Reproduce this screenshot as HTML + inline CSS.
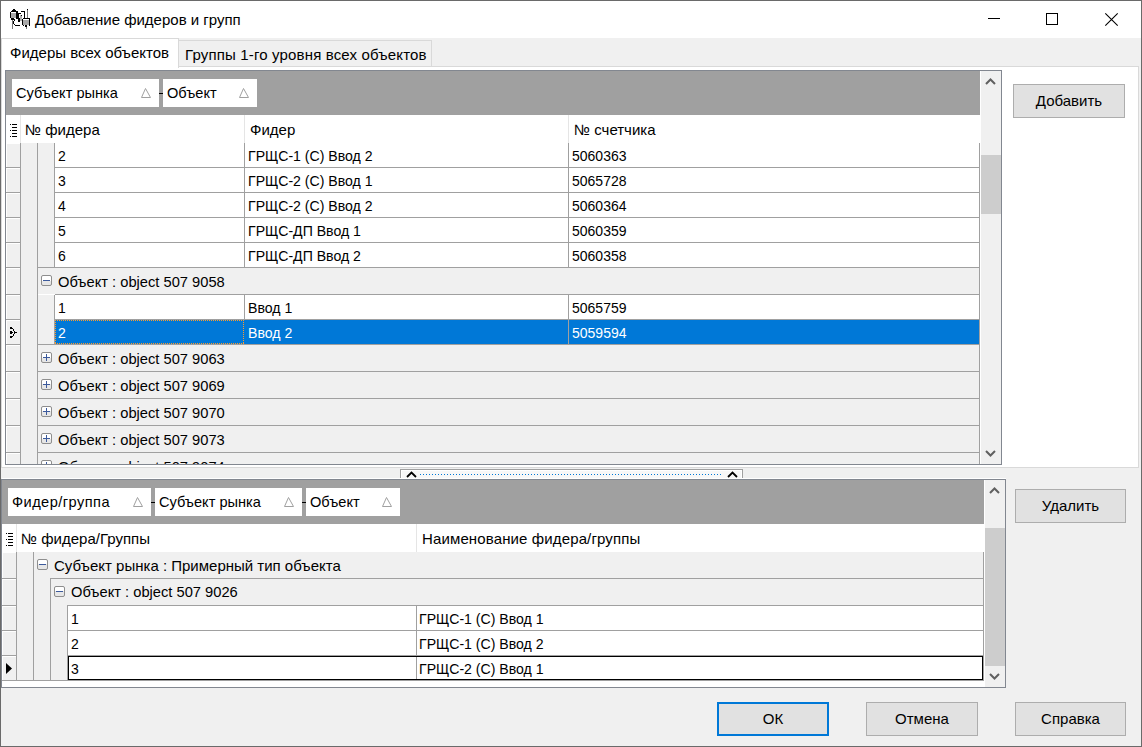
<!DOCTYPE html>
<html><head><meta charset="utf-8"><style>
html,body{margin:0;padding:0;width:1142px;height:747px;overflow:hidden;background:#f0f0f0}
div,span,svg{position:absolute}
span{font-family:"Liberation Sans", sans-serif;white-space:nowrap}
</style></head><body>
<div style="left:0px;top:0px;width:1142px;height:747px;background:#f0f0f0"></div>
<div style="left:1px;top:1px;width:1140px;height:37px;background:#fff"></div>
<div style="left:0px;top:0px;width:1142px;height:1px;background:#6a6a6a"></div>
<div style="left:0px;top:746px;width:1142px;height:1px;background:#6a6a6a"></div>
<div style="left:0px;top:0px;width:1px;height:747px;background:#6a6a6a"></div>
<div style="left:1141px;top:0px;width:1px;height:747px;background:#6a6a6a"></div>
<svg style="position:absolute;left:0px;top:0px" width="34" height="32" viewBox="0 0 34 32" shape-rendering="crispEdges"><rect x="13" y="9" width="2" height="1" fill="#000"/><rect x="12" y="10" width="4" height="1" fill="#000"/><rect x="11" y="11" width="6" height="1" fill="#000"/><rect x="10" y="12" width="1" height="6" fill="#000"/><rect x="11" y="12" width="5" height="1" fill="#fff"/><rect x="11" y="13" width="5" height="5" fill="#a8a8a8"/><rect x="16" y="11" width="2" height="8" fill="#000"/><rect x="11" y="18" width="3" height="2" fill="#000"/><rect x="12" y="20" width="1" height="9" fill="#777"/><rect x="14" y="19" width="1" height="2" fill="#000"/><rect x="13" y="21" width="1" height="3" fill="#000"/><rect x="14" y="24" width="1" height="1" fill="#000"/><rect x="15" y="25" width="5" height="1" fill="#000"/><rect x="18" y="13" width="1" height="9" fill="#000"/><rect x="19" y="18" width="1" height="4" fill="#000"/><rect x="20" y="15" width="2" height="6" fill="#b0b0b0"/><rect x="19" y="13" width="2" height="1" fill="#000"/><rect x="21" y="15" width="1" height="1" fill="#000"/><rect x="21" y="11" width="4" height="1" fill="#000"/><rect x="24" y="12" width="1" height="6" fill="#000"/><rect x="27" y="9" width="1" height="9" fill="#777"/><rect x="27" y="9" width="1" height="1" fill="#000"/><rect x="23" y="18" width="7" height="1" fill="#000"/><rect x="22" y="19" width="1" height="6" fill="#000"/><rect x="29" y="19" width="1" height="6" fill="#000"/><rect x="23" y="19" width="6" height="1" fill="#fff"/><rect x="23" y="20" width="6" height="5" fill="#a8a8a8"/><rect x="23" y="25" width="1" height="1" fill="#000"/><rect x="25" y="25" width="2" height="1" fill="#000"/><rect x="29" y="25" width="1" height="1" fill="#000"/><rect x="25" y="26" width="2" height="1" fill="#000"/><rect x="26" y="27" width="1" height="2" fill="#777"/></svg>
<span style="left:35px;top:11.42px;font-size:15px;line-height:normal;color:#000;">Добавление фидеров и групп</span>
<div style="left:988px;top:18px;width:12px;height:1px;background:#000"></div>
<div style="left:1046px;top:13px;width:12px;height:12px;border:1px solid #000;box-sizing:border-box;"></div>
<svg style="position:absolute;left:1104px;top:12px" width="15" height="15" viewBox="0 0 15 15" shape-rendering="crispEdges"><path d="M1.3 1.3 L13.7 13.7 M13.7 1.3 L1.3 13.7" stroke="#000" stroke-width="1.1" fill="none" shape-rendering="geometricPrecision"/></svg>
<div style="left:1px;top:66px;width:1138px;height:402px;border:1px solid #d9d9d9;box-sizing:border-box;background:#fff;"></div>
<div style="left:178px;top:40px;width:254px;height:27px;border:1px solid #d9d9d9;box-sizing:border-box;background:#f0f0f0;"></div>
<div style="left:1px;top:38px;width:178px;height:30px;border:1px solid #d9d9d9;box-sizing:border-box;background:#fff;"></div>
<div style="left:2px;top:66px;width:176px;height:2px;background:#fff"></div>
<span style="left:10px;top:44.42px;font-size:15px;line-height:normal;color:#000;">Фидеры всех объектов</span>
<span style="left:185px;top:46.42px;font-size:15px;line-height:normal;color:#000;letter-spacing:0.16px">Группы 1-го уровня всех объектов</span>
<div style="left:5px;top:70px;width:997px;height:395px;border:1px solid #828790;box-sizing:border-box;background:#fff;"></div>
<div style="left:6px;top:71px;width:974px;height:44px;background:#a0a0a0"></div>
<div style="left:12px;top:79px;width:147px;height:28px;background:#fff"></div>
<span style="left:16px;top:85.29px;font-size:14.6px;line-height:normal;color:#000;letter-spacing:0px">Субъект рынка</span>
<svg style="position:absolute;left:141px;top:88px" width="10" height="10" viewBox="0 0 10 10" shape-rendering="crispEdges"><path d="M4.5 0.5 L0.5 9.5 L9.5 9.5 Z" fill="none" stroke="#a0a0a0" stroke-width="1" shape-rendering="geometricPrecision"/></svg>
<div style="left:159px;top:93px;width:4px;height:1px;background:#000"></div>
<div style="left:163px;top:79px;width:94px;height:28px;background:#fff"></div>
<span style="left:167px;top:85.29px;font-size:14.6px;line-height:normal;color:#000;letter-spacing:0px">Объект</span>
<svg style="position:absolute;left:239px;top:88px" width="10" height="10" viewBox="0 0 10 10" shape-rendering="crispEdges"><path d="M4.5 0.5 L0.5 9.5 L9.5 9.5 Z" fill="none" stroke="#a0a0a0" stroke-width="1" shape-rendering="geometricPrecision"/></svg>
<div style="left:6px;top:115px;width:974px;height:28px;background:#fff"></div>
<div style="left:20px;top:115px;width:1px;height:28px;background:#e5e5e5"></div>
<div style="left:244px;top:115px;width:1px;height:28px;background:#e5e5e5"></div>
<div style="left:568px;top:115px;width:1px;height:28px;background:#e5e5e5"></div>
<svg style="position:absolute;left:10px;top:124px" width="8" height="14" viewBox="0 0 8 14" shape-rendering="crispEdges"><rect x="2" y="0" width="5" height="1" fill="#000"/><rect x="2" y="3" width="5" height="1" fill="#000"/><rect x="2" y="6" width="5" height="1" fill="#000"/><rect x="2" y="9" width="5" height="1" fill="#000"/><rect x="2" y="12" width="5" height="1" fill="#000"/><rect x="0" y="0" width="1" height="1" fill="#000"/><rect x="0" y="6" width="1" height="1" fill="#000"/><rect x="0" y="12" width="1" height="1" fill="#000"/></svg>
<span style="left:25px;top:121.42px;font-size:15px;line-height:normal;color:#000;">№ фидера</span>
<span style="left:250px;top:121.42px;font-size:15px;line-height:normal;color:#000;">Фидер</span>
<span style="left:574px;top:121.42px;font-size:15px;line-height:normal;color:#000;">№ счетчика</span>
<div style="left:980px;top:71px;width:1px;height:393px;background:#fff"></div>
<div style="left:981px;top:71px;width:20px;height:393px;background:#f0f0f0"></div>
<div style="left:981px;top:155px;width:20px;height:59px;background:#cdcdcd"></div>
<svg style="position:absolute;left:985px;top:78px" width="11" height="7" viewBox="0 0 11 7" shape-rendering="crispEdges"><path d="M1 6 L5.5 1.5 L10 6" fill="none" stroke="#606060" stroke-width="2" shape-rendering="geometricPrecision"/></svg>
<svg style="position:absolute;left:985px;top:450px" width="11" height="7" viewBox="0 0 11 7" shape-rendering="crispEdges"><path d="M1 1 L5.5 5.5 L10 1" fill="none" stroke="#606060" stroke-width="2" shape-rendering="geometricPrecision"/></svg>
<div style="left:20px;top:143px;width:1px;height:321px;background:#a0a0a0"></div>
<div style="left:37px;top:143px;width:1px;height:321px;background:#a0a0a0"></div>
<div style="left:21px;top:143px;width:16px;height:321px;background:#f0f0f0"></div>
<div style="left:6px;top:143px;width:14px;height:25px;background:#f0f0f0"></div>
<div style="left:6px;top:143px;width:14px;height:1px;background:#fff"></div>
<div style="left:6px;top:143px;width:1px;height:25px;background:#fff"></div>
<div style="left:6px;top:167px;width:14px;height:1px;background:#a0a0a0"></div>
<div style="left:38px;top:143px;width:16px;height:25px;background:#f0f0f0"></div>
<div style="left:54px;top:143px;width:1px;height:25px;background:#a0a0a0"></div>
<div style="left:244px;top:143px;width:1px;height:25px;background:#a0a0a0"></div>
<div style="left:568px;top:143px;width:1px;height:25px;background:#a0a0a0"></div>
<div style="left:979px;top:143px;width:1px;height:25px;background:#a0a0a0"></div>
<div style="left:55px;top:167px;width:925px;height:1px;background:#a0a0a0"></div>
<span style="left:58px;top:148.33px;font-size:14px;line-height:normal;color:#000;">2</span>
<span style="left:248px;top:148.24px;font-size:14.1px;line-height:normal;color:#000;">ГРЩС-1 (С) Ввод 2</span>
<span style="left:572px;top:148.33px;font-size:14px;line-height:normal;color:#000;">5060363</span>
<div style="left:6px;top:168px;width:14px;height:25px;background:#f0f0f0"></div>
<div style="left:6px;top:168px;width:14px;height:1px;background:#fff"></div>
<div style="left:6px;top:168px;width:1px;height:25px;background:#fff"></div>
<div style="left:6px;top:192px;width:14px;height:1px;background:#a0a0a0"></div>
<div style="left:38px;top:168px;width:16px;height:25px;background:#f0f0f0"></div>
<div style="left:54px;top:168px;width:1px;height:25px;background:#a0a0a0"></div>
<div style="left:244px;top:168px;width:1px;height:25px;background:#a0a0a0"></div>
<div style="left:568px;top:168px;width:1px;height:25px;background:#a0a0a0"></div>
<div style="left:979px;top:168px;width:1px;height:25px;background:#a0a0a0"></div>
<div style="left:55px;top:192px;width:925px;height:1px;background:#a0a0a0"></div>
<span style="left:58px;top:173.33px;font-size:14px;line-height:normal;color:#000;">3</span>
<span style="left:248px;top:173.24px;font-size:14.1px;line-height:normal;color:#000;">ГРЩС-2 (С) Ввод 1</span>
<span style="left:572px;top:173.33px;font-size:14px;line-height:normal;color:#000;">5065728</span>
<div style="left:6px;top:193px;width:14px;height:25px;background:#f0f0f0"></div>
<div style="left:6px;top:193px;width:14px;height:1px;background:#fff"></div>
<div style="left:6px;top:193px;width:1px;height:25px;background:#fff"></div>
<div style="left:6px;top:217px;width:14px;height:1px;background:#a0a0a0"></div>
<div style="left:38px;top:193px;width:16px;height:25px;background:#f0f0f0"></div>
<div style="left:54px;top:193px;width:1px;height:25px;background:#a0a0a0"></div>
<div style="left:244px;top:193px;width:1px;height:25px;background:#a0a0a0"></div>
<div style="left:568px;top:193px;width:1px;height:25px;background:#a0a0a0"></div>
<div style="left:979px;top:193px;width:1px;height:25px;background:#a0a0a0"></div>
<div style="left:55px;top:217px;width:925px;height:1px;background:#a0a0a0"></div>
<span style="left:58px;top:198.33px;font-size:14px;line-height:normal;color:#000;">4</span>
<span style="left:248px;top:198.24px;font-size:14.1px;line-height:normal;color:#000;">ГРЩС-2 (С) Ввод 2</span>
<span style="left:572px;top:198.33px;font-size:14px;line-height:normal;color:#000;">5060364</span>
<div style="left:6px;top:218px;width:14px;height:25px;background:#f0f0f0"></div>
<div style="left:6px;top:218px;width:14px;height:1px;background:#fff"></div>
<div style="left:6px;top:218px;width:1px;height:25px;background:#fff"></div>
<div style="left:6px;top:242px;width:14px;height:1px;background:#a0a0a0"></div>
<div style="left:38px;top:218px;width:16px;height:25px;background:#f0f0f0"></div>
<div style="left:54px;top:218px;width:1px;height:25px;background:#a0a0a0"></div>
<div style="left:244px;top:218px;width:1px;height:25px;background:#a0a0a0"></div>
<div style="left:568px;top:218px;width:1px;height:25px;background:#a0a0a0"></div>
<div style="left:979px;top:218px;width:1px;height:25px;background:#a0a0a0"></div>
<div style="left:55px;top:242px;width:925px;height:1px;background:#a0a0a0"></div>
<span style="left:58px;top:223.33px;font-size:14px;line-height:normal;color:#000;">5</span>
<span style="left:248px;top:223.24px;font-size:14.1px;line-height:normal;color:#000;">ГРЩС-ДП Ввод 1</span>
<span style="left:572px;top:223.33px;font-size:14px;line-height:normal;color:#000;">5060359</span>
<div style="left:6px;top:243px;width:14px;height:25px;background:#f0f0f0"></div>
<div style="left:6px;top:243px;width:14px;height:1px;background:#fff"></div>
<div style="left:6px;top:243px;width:1px;height:25px;background:#fff"></div>
<div style="left:6px;top:267px;width:14px;height:1px;background:#a0a0a0"></div>
<div style="left:38px;top:243px;width:16px;height:25px;background:#f0f0f0"></div>
<div style="left:54px;top:243px;width:1px;height:25px;background:#a0a0a0"></div>
<div style="left:244px;top:243px;width:1px;height:25px;background:#a0a0a0"></div>
<div style="left:568px;top:243px;width:1px;height:25px;background:#a0a0a0"></div>
<div style="left:979px;top:243px;width:1px;height:25px;background:#a0a0a0"></div>
<div style="left:55px;top:267px;width:925px;height:1px;background:#a0a0a0"></div>
<span style="left:58px;top:248.33px;font-size:14px;line-height:normal;color:#000;">6</span>
<span style="left:248px;top:248.24px;font-size:14.1px;line-height:normal;color:#000;">ГРЩС-ДП Ввод 2</span>
<span style="left:572px;top:248.33px;font-size:14px;line-height:normal;color:#000;">5060358</span>
<div style="left:6px;top:268px;width:14px;height:27px;background:#f0f0f0"></div>
<div style="left:6px;top:268px;width:14px;height:1px;background:#fff"></div>
<div style="left:6px;top:268px;width:1px;height:27px;background:#fff"></div>
<div style="left:6px;top:294px;width:14px;height:1px;background:#a0a0a0"></div>
<div style="left:38px;top:267px;width:942px;height:1px;background:#a0a0a0"></div>
<div style="left:38px;top:268px;width:941px;height:26px;background:#f0f0f0"></div>
<div style="left:979px;top:268px;width:1px;height:27px;background:#a0a0a0"></div>
<svg style="position:absolute;left:41px;top:275px" width="11" height="11" viewBox="0 0 11 11" shape-rendering="crispEdges"><defs><linearGradient id="g" x1="0" y1="0" x2="0" y2="1"><stop offset="0.5" stop-color="#fff"/><stop offset="0.5" stop-color="#e6e6e6"/></linearGradient></defs><rect x="0.5" y="0.5" width="10" height="10" rx="1.5" fill="url(#g)" stroke="#8e8e8e" stroke-width="1" shape-rendering="geometricPrecision"/><rect x="2" y="5" width="7" height="1" fill="#3c5a9c"/></svg>
<span style="left:58px;top:274.20px;font-size:14.7px;line-height:normal;color:#000;">Объект : object 507 9058</span>
<div style="left:55px;top:294px;width:925px;height:1px;background:#a0a0a0"></div>
<div style="left:6px;top:295px;width:14px;height:25px;background:#f0f0f0"></div>
<div style="left:6px;top:295px;width:14px;height:1px;background:#fff"></div>
<div style="left:6px;top:295px;width:1px;height:25px;background:#fff"></div>
<div style="left:6px;top:319px;width:14px;height:1px;background:#a0a0a0"></div>
<div style="left:38px;top:295px;width:16px;height:25px;background:#f0f0f0"></div>
<div style="left:54px;top:295px;width:1px;height:25px;background:#a0a0a0"></div>
<div style="left:244px;top:295px;width:1px;height:25px;background:#a0a0a0"></div>
<div style="left:568px;top:295px;width:1px;height:25px;background:#a0a0a0"></div>
<div style="left:979px;top:295px;width:1px;height:25px;background:#a0a0a0"></div>
<div style="left:55px;top:319px;width:925px;height:1px;background:#a0a0a0"></div>
<span style="left:58px;top:300.33px;font-size:14px;line-height:normal;color:#000;">1</span>
<span style="left:248px;top:300.24px;font-size:14.1px;line-height:normal;color:#000;">Ввод 1</span>
<span style="left:572px;top:300.33px;font-size:14px;line-height:normal;color:#000;">5065759</span>
<div style="left:6px;top:320px;width:14px;height:25px;background:#f0f0f0"></div>
<div style="left:6px;top:320px;width:14px;height:1px;background:#fff"></div>
<div style="left:6px;top:320px;width:1px;height:25px;background:#fff"></div>
<div style="left:6px;top:344px;width:14px;height:1px;background:#a0a0a0"></div>
<div style="left:38px;top:320px;width:16px;height:25px;background:#f0f0f0"></div>
<div style="left:54px;top:320px;width:1px;height:25px;background:#a0a0a0"></div>
<div style="left:55px;top:320px;width:924px;height:24px;background:#0078d7"></div>
<div style="left:568px;top:320px;width:1px;height:24px;background:#a0a0a0"></div>
<svg style="position:absolute;left:55px;top:320px" width="189" height="24" viewBox="0 0 189 24" shape-rendering="crispEdges"><rect x="0" y="0" width="1" height="1" fill="#ff9c2a"/><rect x="0" y="23" width="1" height="1" fill="#ff9c2a"/><rect x="2" y="0" width="1" height="1" fill="#ff9c2a"/><rect x="2" y="23" width="1" height="1" fill="#ff9c2a"/><rect x="4" y="0" width="1" height="1" fill="#ff9c2a"/><rect x="4" y="23" width="1" height="1" fill="#ff9c2a"/><rect x="6" y="0" width="1" height="1" fill="#ff9c2a"/><rect x="6" y="23" width="1" height="1" fill="#ff9c2a"/><rect x="8" y="0" width="1" height="1" fill="#ff9c2a"/><rect x="8" y="23" width="1" height="1" fill="#ff9c2a"/><rect x="10" y="0" width="1" height="1" fill="#ff9c2a"/><rect x="10" y="23" width="1" height="1" fill="#ff9c2a"/><rect x="12" y="0" width="1" height="1" fill="#ff9c2a"/><rect x="12" y="23" width="1" height="1" fill="#ff9c2a"/><rect x="14" y="0" width="1" height="1" fill="#ff9c2a"/><rect x="14" y="23" width="1" height="1" fill="#ff9c2a"/><rect x="16" y="0" width="1" height="1" fill="#ff9c2a"/><rect x="16" y="23" width="1" height="1" fill="#ff9c2a"/><rect x="18" y="0" width="1" height="1" fill="#ff9c2a"/><rect x="18" y="23" width="1" height="1" fill="#ff9c2a"/><rect x="20" y="0" width="1" height="1" fill="#ff9c2a"/><rect x="20" y="23" width="1" height="1" fill="#ff9c2a"/><rect x="22" y="0" width="1" height="1" fill="#ff9c2a"/><rect x="22" y="23" width="1" height="1" fill="#ff9c2a"/><rect x="24" y="0" width="1" height="1" fill="#ff9c2a"/><rect x="24" y="23" width="1" height="1" fill="#ff9c2a"/><rect x="26" y="0" width="1" height="1" fill="#ff9c2a"/><rect x="26" y="23" width="1" height="1" fill="#ff9c2a"/><rect x="28" y="0" width="1" height="1" fill="#ff9c2a"/><rect x="28" y="23" width="1" height="1" fill="#ff9c2a"/><rect x="30" y="0" width="1" height="1" fill="#ff9c2a"/><rect x="30" y="23" width="1" height="1" fill="#ff9c2a"/><rect x="32" y="0" width="1" height="1" fill="#ff9c2a"/><rect x="32" y="23" width="1" height="1" fill="#ff9c2a"/><rect x="34" y="0" width="1" height="1" fill="#ff9c2a"/><rect x="34" y="23" width="1" height="1" fill="#ff9c2a"/><rect x="36" y="0" width="1" height="1" fill="#ff9c2a"/><rect x="36" y="23" width="1" height="1" fill="#ff9c2a"/><rect x="38" y="0" width="1" height="1" fill="#ff9c2a"/><rect x="38" y="23" width="1" height="1" fill="#ff9c2a"/><rect x="40" y="0" width="1" height="1" fill="#ff9c2a"/><rect x="40" y="23" width="1" height="1" fill="#ff9c2a"/><rect x="42" y="0" width="1" height="1" fill="#ff9c2a"/><rect x="42" y="23" width="1" height="1" fill="#ff9c2a"/><rect x="44" y="0" width="1" height="1" fill="#ff9c2a"/><rect x="44" y="23" width="1" height="1" fill="#ff9c2a"/><rect x="46" y="0" width="1" height="1" fill="#ff9c2a"/><rect x="46" y="23" width="1" height="1" fill="#ff9c2a"/><rect x="48" y="0" width="1" height="1" fill="#ff9c2a"/><rect x="48" y="23" width="1" height="1" fill="#ff9c2a"/><rect x="50" y="0" width="1" height="1" fill="#ff9c2a"/><rect x="50" y="23" width="1" height="1" fill="#ff9c2a"/><rect x="52" y="0" width="1" height="1" fill="#ff9c2a"/><rect x="52" y="23" width="1" height="1" fill="#ff9c2a"/><rect x="54" y="0" width="1" height="1" fill="#ff9c2a"/><rect x="54" y="23" width="1" height="1" fill="#ff9c2a"/><rect x="56" y="0" width="1" height="1" fill="#ff9c2a"/><rect x="56" y="23" width="1" height="1" fill="#ff9c2a"/><rect x="58" y="0" width="1" height="1" fill="#ff9c2a"/><rect x="58" y="23" width="1" height="1" fill="#ff9c2a"/><rect x="60" y="0" width="1" height="1" fill="#ff9c2a"/><rect x="60" y="23" width="1" height="1" fill="#ff9c2a"/><rect x="62" y="0" width="1" height="1" fill="#ff9c2a"/><rect x="62" y="23" width="1" height="1" fill="#ff9c2a"/><rect x="64" y="0" width="1" height="1" fill="#ff9c2a"/><rect x="64" y="23" width="1" height="1" fill="#ff9c2a"/><rect x="66" y="0" width="1" height="1" fill="#ff9c2a"/><rect x="66" y="23" width="1" height="1" fill="#ff9c2a"/><rect x="68" y="0" width="1" height="1" fill="#ff9c2a"/><rect x="68" y="23" width="1" height="1" fill="#ff9c2a"/><rect x="70" y="0" width="1" height="1" fill="#ff9c2a"/><rect x="70" y="23" width="1" height="1" fill="#ff9c2a"/><rect x="72" y="0" width="1" height="1" fill="#ff9c2a"/><rect x="72" y="23" width="1" height="1" fill="#ff9c2a"/><rect x="74" y="0" width="1" height="1" fill="#ff9c2a"/><rect x="74" y="23" width="1" height="1" fill="#ff9c2a"/><rect x="76" y="0" width="1" height="1" fill="#ff9c2a"/><rect x="76" y="23" width="1" height="1" fill="#ff9c2a"/><rect x="78" y="0" width="1" height="1" fill="#ff9c2a"/><rect x="78" y="23" width="1" height="1" fill="#ff9c2a"/><rect x="80" y="0" width="1" height="1" fill="#ff9c2a"/><rect x="80" y="23" width="1" height="1" fill="#ff9c2a"/><rect x="82" y="0" width="1" height="1" fill="#ff9c2a"/><rect x="82" y="23" width="1" height="1" fill="#ff9c2a"/><rect x="84" y="0" width="1" height="1" fill="#ff9c2a"/><rect x="84" y="23" width="1" height="1" fill="#ff9c2a"/><rect x="86" y="0" width="1" height="1" fill="#ff9c2a"/><rect x="86" y="23" width="1" height="1" fill="#ff9c2a"/><rect x="88" y="0" width="1" height="1" fill="#ff9c2a"/><rect x="88" y="23" width="1" height="1" fill="#ff9c2a"/><rect x="90" y="0" width="1" height="1" fill="#ff9c2a"/><rect x="90" y="23" width="1" height="1" fill="#ff9c2a"/><rect x="92" y="0" width="1" height="1" fill="#ff9c2a"/><rect x="92" y="23" width="1" height="1" fill="#ff9c2a"/><rect x="94" y="0" width="1" height="1" fill="#ff9c2a"/><rect x="94" y="23" width="1" height="1" fill="#ff9c2a"/><rect x="96" y="0" width="1" height="1" fill="#ff9c2a"/><rect x="96" y="23" width="1" height="1" fill="#ff9c2a"/><rect x="98" y="0" width="1" height="1" fill="#ff9c2a"/><rect x="98" y="23" width="1" height="1" fill="#ff9c2a"/><rect x="100" y="0" width="1" height="1" fill="#ff9c2a"/><rect x="100" y="23" width="1" height="1" fill="#ff9c2a"/><rect x="102" y="0" width="1" height="1" fill="#ff9c2a"/><rect x="102" y="23" width="1" height="1" fill="#ff9c2a"/><rect x="104" y="0" width="1" height="1" fill="#ff9c2a"/><rect x="104" y="23" width="1" height="1" fill="#ff9c2a"/><rect x="106" y="0" width="1" height="1" fill="#ff9c2a"/><rect x="106" y="23" width="1" height="1" fill="#ff9c2a"/><rect x="108" y="0" width="1" height="1" fill="#ff9c2a"/><rect x="108" y="23" width="1" height="1" fill="#ff9c2a"/><rect x="110" y="0" width="1" height="1" fill="#ff9c2a"/><rect x="110" y="23" width="1" height="1" fill="#ff9c2a"/><rect x="112" y="0" width="1" height="1" fill="#ff9c2a"/><rect x="112" y="23" width="1" height="1" fill="#ff9c2a"/><rect x="114" y="0" width="1" height="1" fill="#ff9c2a"/><rect x="114" y="23" width="1" height="1" fill="#ff9c2a"/><rect x="116" y="0" width="1" height="1" fill="#ff9c2a"/><rect x="116" y="23" width="1" height="1" fill="#ff9c2a"/><rect x="118" y="0" width="1" height="1" fill="#ff9c2a"/><rect x="118" y="23" width="1" height="1" fill="#ff9c2a"/><rect x="120" y="0" width="1" height="1" fill="#ff9c2a"/><rect x="120" y="23" width="1" height="1" fill="#ff9c2a"/><rect x="122" y="0" width="1" height="1" fill="#ff9c2a"/><rect x="122" y="23" width="1" height="1" fill="#ff9c2a"/><rect x="124" y="0" width="1" height="1" fill="#ff9c2a"/><rect x="124" y="23" width="1" height="1" fill="#ff9c2a"/><rect x="126" y="0" width="1" height="1" fill="#ff9c2a"/><rect x="126" y="23" width="1" height="1" fill="#ff9c2a"/><rect x="128" y="0" width="1" height="1" fill="#ff9c2a"/><rect x="128" y="23" width="1" height="1" fill="#ff9c2a"/><rect x="130" y="0" width="1" height="1" fill="#ff9c2a"/><rect x="130" y="23" width="1" height="1" fill="#ff9c2a"/><rect x="132" y="0" width="1" height="1" fill="#ff9c2a"/><rect x="132" y="23" width="1" height="1" fill="#ff9c2a"/><rect x="134" y="0" width="1" height="1" fill="#ff9c2a"/><rect x="134" y="23" width="1" height="1" fill="#ff9c2a"/><rect x="136" y="0" width="1" height="1" fill="#ff9c2a"/><rect x="136" y="23" width="1" height="1" fill="#ff9c2a"/><rect x="138" y="0" width="1" height="1" fill="#ff9c2a"/><rect x="138" y="23" width="1" height="1" fill="#ff9c2a"/><rect x="140" y="0" width="1" height="1" fill="#ff9c2a"/><rect x="140" y="23" width="1" height="1" fill="#ff9c2a"/><rect x="142" y="0" width="1" height="1" fill="#ff9c2a"/><rect x="142" y="23" width="1" height="1" fill="#ff9c2a"/><rect x="144" y="0" width="1" height="1" fill="#ff9c2a"/><rect x="144" y="23" width="1" height="1" fill="#ff9c2a"/><rect x="146" y="0" width="1" height="1" fill="#ff9c2a"/><rect x="146" y="23" width="1" height="1" fill="#ff9c2a"/><rect x="148" y="0" width="1" height="1" fill="#ff9c2a"/><rect x="148" y="23" width="1" height="1" fill="#ff9c2a"/><rect x="150" y="0" width="1" height="1" fill="#ff9c2a"/><rect x="150" y="23" width="1" height="1" fill="#ff9c2a"/><rect x="152" y="0" width="1" height="1" fill="#ff9c2a"/><rect x="152" y="23" width="1" height="1" fill="#ff9c2a"/><rect x="154" y="0" width="1" height="1" fill="#ff9c2a"/><rect x="154" y="23" width="1" height="1" fill="#ff9c2a"/><rect x="156" y="0" width="1" height="1" fill="#ff9c2a"/><rect x="156" y="23" width="1" height="1" fill="#ff9c2a"/><rect x="158" y="0" width="1" height="1" fill="#ff9c2a"/><rect x="158" y="23" width="1" height="1" fill="#ff9c2a"/><rect x="160" y="0" width="1" height="1" fill="#ff9c2a"/><rect x="160" y="23" width="1" height="1" fill="#ff9c2a"/><rect x="162" y="0" width="1" height="1" fill="#ff9c2a"/><rect x="162" y="23" width="1" height="1" fill="#ff9c2a"/><rect x="164" y="0" width="1" height="1" fill="#ff9c2a"/><rect x="164" y="23" width="1" height="1" fill="#ff9c2a"/><rect x="166" y="0" width="1" height="1" fill="#ff9c2a"/><rect x="166" y="23" width="1" height="1" fill="#ff9c2a"/><rect x="168" y="0" width="1" height="1" fill="#ff9c2a"/><rect x="168" y="23" width="1" height="1" fill="#ff9c2a"/><rect x="170" y="0" width="1" height="1" fill="#ff9c2a"/><rect x="170" y="23" width="1" height="1" fill="#ff9c2a"/><rect x="172" y="0" width="1" height="1" fill="#ff9c2a"/><rect x="172" y="23" width="1" height="1" fill="#ff9c2a"/><rect x="174" y="0" width="1" height="1" fill="#ff9c2a"/><rect x="174" y="23" width="1" height="1" fill="#ff9c2a"/><rect x="176" y="0" width="1" height="1" fill="#ff9c2a"/><rect x="176" y="23" width="1" height="1" fill="#ff9c2a"/><rect x="178" y="0" width="1" height="1" fill="#ff9c2a"/><rect x="178" y="23" width="1" height="1" fill="#ff9c2a"/><rect x="180" y="0" width="1" height="1" fill="#ff9c2a"/><rect x="180" y="23" width="1" height="1" fill="#ff9c2a"/><rect x="182" y="0" width="1" height="1" fill="#ff9c2a"/><rect x="182" y="23" width="1" height="1" fill="#ff9c2a"/><rect x="184" y="0" width="1" height="1" fill="#ff9c2a"/><rect x="184" y="23" width="1" height="1" fill="#ff9c2a"/><rect x="186" y="0" width="1" height="1" fill="#ff9c2a"/><rect x="186" y="23" width="1" height="1" fill="#ff9c2a"/><rect x="188" y="0" width="1" height="1" fill="#ff9c2a"/><rect x="188" y="23" width="1" height="1" fill="#ff9c2a"/><rect x="0" y="2" width="1" height="1" fill="#ff9c2a"/><rect x="188" y="2" width="1" height="1" fill="#ff9c2a"/><rect x="0" y="4" width="1" height="1" fill="#ff9c2a"/><rect x="188" y="4" width="1" height="1" fill="#ff9c2a"/><rect x="0" y="6" width="1" height="1" fill="#ff9c2a"/><rect x="188" y="6" width="1" height="1" fill="#ff9c2a"/><rect x="0" y="8" width="1" height="1" fill="#ff9c2a"/><rect x="188" y="8" width="1" height="1" fill="#ff9c2a"/><rect x="0" y="10" width="1" height="1" fill="#ff9c2a"/><rect x="188" y="10" width="1" height="1" fill="#ff9c2a"/><rect x="0" y="12" width="1" height="1" fill="#ff9c2a"/><rect x="188" y="12" width="1" height="1" fill="#ff9c2a"/><rect x="0" y="14" width="1" height="1" fill="#ff9c2a"/><rect x="188" y="14" width="1" height="1" fill="#ff9c2a"/><rect x="0" y="16" width="1" height="1" fill="#ff9c2a"/><rect x="188" y="16" width="1" height="1" fill="#ff9c2a"/><rect x="0" y="18" width="1" height="1" fill="#ff9c2a"/><rect x="188" y="18" width="1" height="1" fill="#ff9c2a"/><rect x="0" y="20" width="1" height="1" fill="#ff9c2a"/><rect x="188" y="20" width="1" height="1" fill="#ff9c2a"/><rect x="0" y="22" width="1" height="1" fill="#ff9c2a"/><rect x="188" y="22" width="1" height="1" fill="#ff9c2a"/></svg>
<div style="left:979px;top:320px;width:1px;height:25px;background:#a0a0a0"></div>
<div style="left:55px;top:344px;width:925px;height:1px;background:#a0a0a0"></div>
<span style="left:58px;top:325.33px;font-size:14px;line-height:normal;color:#fff;">2</span>
<span style="left:248px;top:325.24px;font-size:14.1px;line-height:normal;color:#fff;">Ввод 2</span>
<span style="left:572px;top:325.33px;font-size:14px;line-height:normal;color:#fff;">5059594</span>
<svg style="position:absolute;left:10px;top:327px" width="8" height="12" viewBox="0 0 8 12" shape-rendering="crispEdges"><rect x="0" y="0" width="2" height="2" fill="#000"/><rect x="2" y="1" width="1" height="1" fill="#000"/><rect x="3" y="2" width="1" height="2" fill="#000"/><rect x="4" y="4" width="1" height="3" fill="#000"/><rect x="5" y="5" width="2" height="1" fill="#000"/><rect x="0" y="4" width="2" height="3" fill="#000"/><rect x="2" y="5" width="1" height="1" fill="#000"/><rect x="3" y="7" width="1" height="2" fill="#000"/><rect x="2" y="9" width="1" height="1" fill="#000"/><rect x="0" y="9" width="2" height="2" fill="#000"/></svg>
<div style="left:0;top:0;width:1142px;height:464px;overflow:hidden">
<div style="left:6px;top:345px;width:14px;height:27px;background:#f0f0f0"></div>
<div style="left:6px;top:345px;width:14px;height:1px;background:#fff"></div>
<div style="left:6px;top:345px;width:1px;height:27px;background:#fff"></div>
<div style="left:6px;top:371px;width:14px;height:1px;background:#a0a0a0"></div>
<div style="left:38px;top:344px;width:942px;height:1px;background:#a0a0a0"></div>
<div style="left:38px;top:345px;width:941px;height:26px;background:#f0f0f0"></div>
<div style="left:979px;top:345px;width:1px;height:27px;background:#a0a0a0"></div>
<svg style="position:absolute;left:41px;top:352px" width="11" height="11" viewBox="0 0 11 11" shape-rendering="crispEdges"><defs><linearGradient id="g" x1="0" y1="0" x2="0" y2="1"><stop offset="0.5" stop-color="#fff"/><stop offset="0.5" stop-color="#e6e6e6"/></linearGradient></defs><rect x="0.5" y="0.5" width="10" height="10" rx="1.5" fill="url(#g)" stroke="#8e8e8e" stroke-width="1" shape-rendering="geometricPrecision"/><rect x="2" y="5" width="7" height="1" fill="#3c5a9c"/><rect x="5" y="2" width="1" height="7" fill="#3c5a9c"/></svg>
<span style="left:58px;top:351.20px;font-size:14.7px;line-height:normal;color:#000;">Объект : object 507 9063</span>
<div style="left:6px;top:372px;width:14px;height:27px;background:#f0f0f0"></div>
<div style="left:6px;top:372px;width:14px;height:1px;background:#fff"></div>
<div style="left:6px;top:372px;width:1px;height:27px;background:#fff"></div>
<div style="left:6px;top:398px;width:14px;height:1px;background:#a0a0a0"></div>
<div style="left:38px;top:371px;width:942px;height:1px;background:#a0a0a0"></div>
<div style="left:38px;top:372px;width:941px;height:26px;background:#f0f0f0"></div>
<div style="left:979px;top:372px;width:1px;height:27px;background:#a0a0a0"></div>
<svg style="position:absolute;left:41px;top:379px" width="11" height="11" viewBox="0 0 11 11" shape-rendering="crispEdges"><defs><linearGradient id="g" x1="0" y1="0" x2="0" y2="1"><stop offset="0.5" stop-color="#fff"/><stop offset="0.5" stop-color="#e6e6e6"/></linearGradient></defs><rect x="0.5" y="0.5" width="10" height="10" rx="1.5" fill="url(#g)" stroke="#8e8e8e" stroke-width="1" shape-rendering="geometricPrecision"/><rect x="2" y="5" width="7" height="1" fill="#3c5a9c"/><rect x="5" y="2" width="1" height="7" fill="#3c5a9c"/></svg>
<span style="left:58px;top:378.20px;font-size:14.7px;line-height:normal;color:#000;">Объект : object 507 9069</span>
<div style="left:6px;top:399px;width:14px;height:27px;background:#f0f0f0"></div>
<div style="left:6px;top:399px;width:14px;height:1px;background:#fff"></div>
<div style="left:6px;top:399px;width:1px;height:27px;background:#fff"></div>
<div style="left:6px;top:425px;width:14px;height:1px;background:#a0a0a0"></div>
<div style="left:38px;top:398px;width:942px;height:1px;background:#a0a0a0"></div>
<div style="left:38px;top:399px;width:941px;height:26px;background:#f0f0f0"></div>
<div style="left:979px;top:399px;width:1px;height:27px;background:#a0a0a0"></div>
<svg style="position:absolute;left:41px;top:406px" width="11" height="11" viewBox="0 0 11 11" shape-rendering="crispEdges"><defs><linearGradient id="g" x1="0" y1="0" x2="0" y2="1"><stop offset="0.5" stop-color="#fff"/><stop offset="0.5" stop-color="#e6e6e6"/></linearGradient></defs><rect x="0.5" y="0.5" width="10" height="10" rx="1.5" fill="url(#g)" stroke="#8e8e8e" stroke-width="1" shape-rendering="geometricPrecision"/><rect x="2" y="5" width="7" height="1" fill="#3c5a9c"/><rect x="5" y="2" width="1" height="7" fill="#3c5a9c"/></svg>
<span style="left:58px;top:405.20px;font-size:14.7px;line-height:normal;color:#000;">Объект : object 507 9070</span>
<div style="left:6px;top:426px;width:14px;height:27px;background:#f0f0f0"></div>
<div style="left:6px;top:426px;width:14px;height:1px;background:#fff"></div>
<div style="left:6px;top:426px;width:1px;height:27px;background:#fff"></div>
<div style="left:6px;top:452px;width:14px;height:1px;background:#a0a0a0"></div>
<div style="left:38px;top:425px;width:942px;height:1px;background:#a0a0a0"></div>
<div style="left:38px;top:426px;width:941px;height:26px;background:#f0f0f0"></div>
<div style="left:979px;top:426px;width:1px;height:27px;background:#a0a0a0"></div>
<svg style="position:absolute;left:41px;top:433px" width="11" height="11" viewBox="0 0 11 11" shape-rendering="crispEdges"><defs><linearGradient id="g" x1="0" y1="0" x2="0" y2="1"><stop offset="0.5" stop-color="#fff"/><stop offset="0.5" stop-color="#e6e6e6"/></linearGradient></defs><rect x="0.5" y="0.5" width="10" height="10" rx="1.5" fill="url(#g)" stroke="#8e8e8e" stroke-width="1" shape-rendering="geometricPrecision"/><rect x="2" y="5" width="7" height="1" fill="#3c5a9c"/><rect x="5" y="2" width="1" height="7" fill="#3c5a9c"/></svg>
<span style="left:58px;top:432.20px;font-size:14.7px;line-height:normal;color:#000;">Объект : object 507 9073</span>
<div style="left:6px;top:453px;width:14px;height:11px;background:#f0f0f0"></div>
<div style="left:6px;top:453px;width:14px;height:1px;background:#fff"></div>
<div style="left:6px;top:453px;width:1px;height:11px;background:#fff"></div>
<div style="left:38px;top:452px;width:942px;height:1px;background:#a0a0a0"></div>
<div style="left:38px;top:453px;width:941px;height:11px;background:#f0f0f0"></div>
<div style="left:979px;top:453px;width:1px;height:11px;background:#a0a0a0"></div>
<svg style="position:absolute;left:41px;top:460px" width="11" height="11" viewBox="0 0 11 11" shape-rendering="crispEdges"><defs><linearGradient id="g" x1="0" y1="0" x2="0" y2="1"><stop offset="0.5" stop-color="#fff"/><stop offset="0.5" stop-color="#e6e6e6"/></linearGradient></defs><rect x="0.5" y="0.5" width="10" height="10" rx="1.5" fill="url(#g)" stroke="#8e8e8e" stroke-width="1" shape-rendering="geometricPrecision"/><rect x="2" y="5" width="7" height="1" fill="#3c5a9c"/><rect x="5" y="2" width="1" height="7" fill="#3c5a9c"/></svg>
<span style="left:58px;top:459.20px;font-size:14.7px;line-height:normal;color:#000;">Объект : object 507 9074</span>
</div>
<div style="left:6px;top:464px;width:995px;height:1px;background:#828790"></div>
<div style="left:2px;top:465px;width:1136px;height:2px;background:#fff"></div>
<div style="left:1013px;top:84px;width:112px;height:34px;border:1px solid #adadad;box-sizing:border-box;background:#e1e1e1;"></div>
<span style="left:1013px;width:112px;text-align:center;top:92.42px;font-size:15px;line-height:normal;color:#000">Добавить</span>
<div style="left:400px;top:469px;width:343px;height:10px;border:1px solid #a0a0a0;box-sizing:border-box;background:#fff;"></div>
<div style="left:402px;top:471px;width:339px;height:7px;background:#f7f7f7"></div>
<svg style="position:absolute;left:406px;top:471px" width="11" height="7" viewBox="0 0 11 7" shape-rendering="crispEdges"><path d="M1 6 L5.5 1.5 L10 6" fill="none" stroke="#000" stroke-width="1.8" shape-rendering="geometricPrecision"/></svg>
<svg style="position:absolute;left:727px;top:471px" width="11" height="7" viewBox="0 0 11 7" shape-rendering="crispEdges"><path d="M1 6 L5.5 1.5 L10 6" fill="none" stroke="#000" stroke-width="1.8" shape-rendering="geometricPrecision"/></svg>
<svg style="position:absolute;left:420px;top:474px" width="303" height="1" viewBox="0 0 303 1" shape-rendering="crispEdges"><rect x="0" y="0" width="1" height="1" fill="#0078d7"/><rect x="3" y="0" width="1" height="1" fill="#0078d7"/><rect x="6" y="0" width="1" height="1" fill="#0078d7"/><rect x="9" y="0" width="1" height="1" fill="#0078d7"/><rect x="12" y="0" width="1" height="1" fill="#0078d7"/><rect x="15" y="0" width="1" height="1" fill="#0078d7"/><rect x="18" y="0" width="1" height="1" fill="#0078d7"/><rect x="21" y="0" width="1" height="1" fill="#0078d7"/><rect x="24" y="0" width="1" height="1" fill="#0078d7"/><rect x="27" y="0" width="1" height="1" fill="#0078d7"/><rect x="30" y="0" width="1" height="1" fill="#0078d7"/><rect x="33" y="0" width="1" height="1" fill="#0078d7"/><rect x="36" y="0" width="1" height="1" fill="#0078d7"/><rect x="39" y="0" width="1" height="1" fill="#0078d7"/><rect x="42" y="0" width="1" height="1" fill="#0078d7"/><rect x="45" y="0" width="1" height="1" fill="#0078d7"/><rect x="48" y="0" width="1" height="1" fill="#0078d7"/><rect x="51" y="0" width="1" height="1" fill="#0078d7"/><rect x="54" y="0" width="1" height="1" fill="#0078d7"/><rect x="57" y="0" width="1" height="1" fill="#0078d7"/><rect x="60" y="0" width="1" height="1" fill="#0078d7"/><rect x="63" y="0" width="1" height="1" fill="#0078d7"/><rect x="66" y="0" width="1" height="1" fill="#0078d7"/><rect x="69" y="0" width="1" height="1" fill="#0078d7"/><rect x="72" y="0" width="1" height="1" fill="#0078d7"/><rect x="75" y="0" width="1" height="1" fill="#0078d7"/><rect x="78" y="0" width="1" height="1" fill="#0078d7"/><rect x="81" y="0" width="1" height="1" fill="#0078d7"/><rect x="84" y="0" width="1" height="1" fill="#0078d7"/><rect x="87" y="0" width="1" height="1" fill="#0078d7"/><rect x="90" y="0" width="1" height="1" fill="#0078d7"/><rect x="93" y="0" width="1" height="1" fill="#0078d7"/><rect x="96" y="0" width="1" height="1" fill="#0078d7"/><rect x="99" y="0" width="1" height="1" fill="#0078d7"/><rect x="102" y="0" width="1" height="1" fill="#0078d7"/><rect x="105" y="0" width="1" height="1" fill="#0078d7"/><rect x="108" y="0" width="1" height="1" fill="#0078d7"/><rect x="111" y="0" width="1" height="1" fill="#0078d7"/><rect x="114" y="0" width="1" height="1" fill="#0078d7"/><rect x="117" y="0" width="1" height="1" fill="#0078d7"/><rect x="120" y="0" width="1" height="1" fill="#0078d7"/><rect x="123" y="0" width="1" height="1" fill="#0078d7"/><rect x="126" y="0" width="1" height="1" fill="#0078d7"/><rect x="129" y="0" width="1" height="1" fill="#0078d7"/><rect x="132" y="0" width="1" height="1" fill="#0078d7"/><rect x="135" y="0" width="1" height="1" fill="#0078d7"/><rect x="138" y="0" width="1" height="1" fill="#0078d7"/><rect x="141" y="0" width="1" height="1" fill="#0078d7"/><rect x="144" y="0" width="1" height="1" fill="#0078d7"/><rect x="147" y="0" width="1" height="1" fill="#0078d7"/><rect x="150" y="0" width="1" height="1" fill="#0078d7"/><rect x="153" y="0" width="1" height="1" fill="#0078d7"/><rect x="156" y="0" width="1" height="1" fill="#0078d7"/><rect x="159" y="0" width="1" height="1" fill="#0078d7"/><rect x="162" y="0" width="1" height="1" fill="#0078d7"/><rect x="165" y="0" width="1" height="1" fill="#0078d7"/><rect x="168" y="0" width="1" height="1" fill="#0078d7"/><rect x="171" y="0" width="1" height="1" fill="#0078d7"/><rect x="174" y="0" width="1" height="1" fill="#0078d7"/><rect x="177" y="0" width="1" height="1" fill="#0078d7"/><rect x="180" y="0" width="1" height="1" fill="#0078d7"/><rect x="183" y="0" width="1" height="1" fill="#0078d7"/><rect x="186" y="0" width="1" height="1" fill="#0078d7"/><rect x="189" y="0" width="1" height="1" fill="#0078d7"/><rect x="192" y="0" width="1" height="1" fill="#0078d7"/><rect x="195" y="0" width="1" height="1" fill="#0078d7"/><rect x="198" y="0" width="1" height="1" fill="#0078d7"/><rect x="201" y="0" width="1" height="1" fill="#0078d7"/><rect x="204" y="0" width="1" height="1" fill="#0078d7"/><rect x="207" y="0" width="1" height="1" fill="#0078d7"/><rect x="210" y="0" width="1" height="1" fill="#0078d7"/><rect x="213" y="0" width="1" height="1" fill="#0078d7"/><rect x="216" y="0" width="1" height="1" fill="#0078d7"/><rect x="219" y="0" width="1" height="1" fill="#0078d7"/><rect x="222" y="0" width="1" height="1" fill="#0078d7"/><rect x="225" y="0" width="1" height="1" fill="#0078d7"/><rect x="228" y="0" width="1" height="1" fill="#0078d7"/><rect x="231" y="0" width="1" height="1" fill="#0078d7"/><rect x="234" y="0" width="1" height="1" fill="#0078d7"/><rect x="237" y="0" width="1" height="1" fill="#0078d7"/><rect x="240" y="0" width="1" height="1" fill="#0078d7"/><rect x="243" y="0" width="1" height="1" fill="#0078d7"/><rect x="246" y="0" width="1" height="1" fill="#0078d7"/><rect x="249" y="0" width="1" height="1" fill="#0078d7"/><rect x="252" y="0" width="1" height="1" fill="#0078d7"/><rect x="255" y="0" width="1" height="1" fill="#0078d7"/><rect x="258" y="0" width="1" height="1" fill="#0078d7"/><rect x="261" y="0" width="1" height="1" fill="#0078d7"/><rect x="264" y="0" width="1" height="1" fill="#0078d7"/><rect x="267" y="0" width="1" height="1" fill="#0078d7"/><rect x="270" y="0" width="1" height="1" fill="#0078d7"/><rect x="273" y="0" width="1" height="1" fill="#0078d7"/><rect x="276" y="0" width="1" height="1" fill="#0078d7"/><rect x="279" y="0" width="1" height="1" fill="#0078d7"/><rect x="282" y="0" width="1" height="1" fill="#0078d7"/><rect x="285" y="0" width="1" height="1" fill="#0078d7"/><rect x="288" y="0" width="1" height="1" fill="#0078d7"/><rect x="291" y="0" width="1" height="1" fill="#0078d7"/><rect x="294" y="0" width="1" height="1" fill="#0078d7"/><rect x="297" y="0" width="1" height="1" fill="#0078d7"/><rect x="300" y="0" width="1" height="1" fill="#0078d7"/></svg>
<div style="left:2px;top:478px;width:1004px;height:1px;background:#fff"></div>
<div style="left:1px;top:479px;width:1005px;height:209px;border:1px solid #828790;box-sizing:border-box;background:#fff;"></div>
<div style="left:2px;top:480px;width:982px;height:44px;background:#a0a0a0"></div>
<div style="left:8px;top:488px;width:143px;height:28px;background:#fff"></div>
<span style="left:12px;top:494.29px;font-size:14.6px;line-height:normal;color:#000;letter-spacing:0.45px">Фидер/группа</span>
<svg style="position:absolute;left:133px;top:497px" width="10" height="10" viewBox="0 0 10 10" shape-rendering="crispEdges"><path d="M4.5 0.5 L0.5 9.5 L9.5 9.5 Z" fill="none" stroke="#a0a0a0" stroke-width="1" shape-rendering="geometricPrecision"/></svg>
<div style="left:151px;top:502px;width:4px;height:1px;background:#000"></div>
<div style="left:155px;top:488px;width:147px;height:28px;background:#fff"></div>
<span style="left:159px;top:494.29px;font-size:14.6px;line-height:normal;color:#000;letter-spacing:0px">Субъект рынка</span>
<svg style="position:absolute;left:284px;top:497px" width="10" height="10" viewBox="0 0 10 10" shape-rendering="crispEdges"><path d="M4.5 0.5 L0.5 9.5 L9.5 9.5 Z" fill="none" stroke="#a0a0a0" stroke-width="1" shape-rendering="geometricPrecision"/></svg>
<div style="left:302px;top:502px;width:4px;height:1px;background:#000"></div>
<div style="left:306px;top:488px;width:94px;height:28px;background:#fff"></div>
<span style="left:310px;top:494.29px;font-size:14.6px;line-height:normal;color:#000;letter-spacing:0px">Объект</span>
<svg style="position:absolute;left:382px;top:497px" width="10" height="10" viewBox="0 0 10 10" shape-rendering="crispEdges"><path d="M4.5 0.5 L0.5 9.5 L9.5 9.5 Z" fill="none" stroke="#a0a0a0" stroke-width="1" shape-rendering="geometricPrecision"/></svg>
<div style="left:16px;top:524px;width:1px;height:28px;background:#e5e5e5"></div>
<div style="left:416px;top:524px;width:1px;height:28px;background:#e5e5e5"></div>
<svg style="position:absolute;left:6px;top:533px" width="8" height="14" viewBox="0 0 8 14" shape-rendering="crispEdges"><rect x="2" y="0" width="5" height="1" fill="#000"/><rect x="2" y="3" width="5" height="1" fill="#000"/><rect x="2" y="6" width="5" height="1" fill="#000"/><rect x="2" y="9" width="5" height="1" fill="#000"/><rect x="2" y="12" width="5" height="1" fill="#000"/><rect x="0" y="0" width="1" height="1" fill="#000"/><rect x="0" y="6" width="1" height="1" fill="#000"/><rect x="0" y="12" width="1" height="1" fill="#000"/></svg>
<span style="left:21px;top:530.42px;font-size:15px;line-height:normal;color:#000;">№ фидера/Группы</span>
<span style="left:422px;top:530.42px;font-size:15px;line-height:normal;color:#000;letter-spacing:0.13px">Наименование фидера/группы</span>
<div style="left:984px;top:480px;width:1px;height:207px;background:#fff"></div>
<div style="left:985px;top:480px;width:20px;height:207px;background:#f0f0f0"></div>
<div style="left:985px;top:528px;width:20px;height:138px;background:#cdcdcd"></div>
<svg style="position:absolute;left:989px;top:487px" width="11" height="7" viewBox="0 0 11 7" shape-rendering="crispEdges"><path d="M1 6 L5.5 1.5 L10 6" fill="none" stroke="#606060" stroke-width="2" shape-rendering="geometricPrecision"/></svg>
<svg style="position:absolute;left:989px;top:673px" width="11" height="7" viewBox="0 0 11 7" shape-rendering="crispEdges"><path d="M1 1 L5.5 5.5 L10 1" fill="none" stroke="#606060" stroke-width="2" shape-rendering="geometricPrecision"/></svg>
<div style="left:16px;top:552px;width:1px;height:129px;background:#a0a0a0"></div>
<div style="left:17px;top:552px;width:16px;height:129px;background:#f0f0f0"></div>
<div style="left:33px;top:552px;width:1px;height:129px;background:#a0a0a0"></div>
<div style="left:2px;top:552px;width:14px;height:27px;background:#f0f0f0"></div>
<div style="left:2px;top:552px;width:14px;height:1px;background:#fff"></div>
<div style="left:2px;top:552px;width:1px;height:27px;background:#fff"></div>
<div style="left:2px;top:578px;width:14px;height:1px;background:#a0a0a0"></div>
<div style="left:34px;top:552px;width:949px;height:27px;background:#f0f0f0"></div>
<div style="left:983px;top:552px;width:1px;height:129px;background:#a0a0a0"></div>
<svg style="position:absolute;left:37px;top:559px" width="11" height="11" viewBox="0 0 11 11" shape-rendering="crispEdges"><defs><linearGradient id="g" x1="0" y1="0" x2="0" y2="1"><stop offset="0.5" stop-color="#fff"/><stop offset="0.5" stop-color="#e6e6e6"/></linearGradient></defs><rect x="0.5" y="0.5" width="10" height="10" rx="1.5" fill="url(#g)" stroke="#8e8e8e" stroke-width="1" shape-rendering="geometricPrecision"/><rect x="2" y="5" width="7" height="1" fill="#3c5a9c"/></svg>
<span style="left:54px;top:556.92px;font-size:15px;line-height:normal;color:#000;">Субъект рынка : Примерный тип объекта</span>
<div style="left:2px;top:579px;width:14px;height:27px;background:#f0f0f0"></div>
<div style="left:2px;top:579px;width:14px;height:1px;background:#fff"></div>
<div style="left:2px;top:579px;width:1px;height:27px;background:#fff"></div>
<div style="left:2px;top:605px;width:14px;height:1px;background:#a0a0a0"></div>
<div style="left:50px;top:578px;width:934px;height:1px;background:#a0a0a0"></div>
<div style="left:34px;top:579px;width:16px;height:102px;background:#f0f0f0"></div>
<div style="left:50px;top:578px;width:1px;height:103px;background:#a0a0a0"></div>
<div style="left:51px;top:579px;width:932px;height:26px;background:#f0f0f0"></div>
<svg style="position:absolute;left:54px;top:586px" width="11" height="11" viewBox="0 0 11 11" shape-rendering="crispEdges"><defs><linearGradient id="g" x1="0" y1="0" x2="0" y2="1"><stop offset="0.5" stop-color="#fff"/><stop offset="0.5" stop-color="#e6e6e6"/></linearGradient></defs><rect x="0.5" y="0.5" width="10" height="10" rx="1.5" fill="url(#g)" stroke="#8e8e8e" stroke-width="1" shape-rendering="geometricPrecision"/><rect x="2" y="5" width="7" height="1" fill="#3c5a9c"/></svg>
<span style="left:71px;top:584.20px;font-size:14.7px;line-height:normal;color:#000;">Объект : object 507 9026</span>
<div style="left:51px;top:605px;width:16px;height:76px;background:#f0f0f0"></div>
<div style="left:67px;top:605px;width:1px;height:76px;background:#a0a0a0"></div>
<div style="left:67px;top:605px;width:917px;height:1px;background:#a0a0a0"></div>
<div style="left:2px;top:606px;width:14px;height:25px;background:#f0f0f0"></div>
<div style="left:2px;top:606px;width:14px;height:1px;background:#fff"></div>
<div style="left:2px;top:606px;width:1px;height:25px;background:#fff"></div>
<div style="left:2px;top:630px;width:14px;height:1px;background:#a0a0a0"></div>
<div style="left:68px;top:606px;width:915px;height:24px;background:#fff"></div>
<div style="left:416px;top:606px;width:1px;height:25px;background:#a0a0a0"></div>
<div style="left:67px;top:630px;width:917px;height:1px;background:#a0a0a0"></div>
<span style="left:71px;top:611.33px;font-size:14px;line-height:normal;color:#000;">1</span>
<span style="left:419px;top:611.24px;font-size:14.1px;line-height:normal;color:#000;">ГРЩС-1 (С) Ввод 1</span>
<div style="left:2px;top:631px;width:14px;height:25px;background:#f0f0f0"></div>
<div style="left:2px;top:631px;width:14px;height:1px;background:#fff"></div>
<div style="left:2px;top:631px;width:1px;height:25px;background:#fff"></div>
<div style="left:2px;top:655px;width:14px;height:1px;background:#a0a0a0"></div>
<div style="left:68px;top:631px;width:915px;height:24px;background:#fff"></div>
<div style="left:416px;top:631px;width:1px;height:25px;background:#a0a0a0"></div>
<div style="left:67px;top:655px;width:917px;height:1px;background:#a0a0a0"></div>
<span style="left:71px;top:636.33px;font-size:14px;line-height:normal;color:#000;">2</span>
<span style="left:419px;top:636.24px;font-size:14.1px;line-height:normal;color:#000;">ГРЩС-1 (С) Ввод 2</span>
<div style="left:2px;top:656px;width:14px;height:25px;background:#f0f0f0"></div>
<div style="left:2px;top:656px;width:14px;height:1px;background:#fff"></div>
<div style="left:2px;top:656px;width:1px;height:25px;background:#fff"></div>
<div style="left:2px;top:680px;width:14px;height:1px;background:#a0a0a0"></div>
<div style="left:68px;top:656px;width:915px;height:24px;background:#fff"></div>
<div style="left:416px;top:656px;width:1px;height:25px;background:#a0a0a0"></div>
<div style="left:67px;top:680px;width:917px;height:1px;background:#a0a0a0"></div>
<span style="left:71px;top:661.33px;font-size:14px;line-height:normal;color:#000;">3</span>
<span style="left:419px;top:661.24px;font-size:14.1px;line-height:normal;color:#000;">ГРЩС-2 (С) Ввод 1</span>
<div style="left:2px;top:680px;width:982px;height:1px;background:#a0a0a0"></div>
<div style="left:68px;top:656px;width:915px;height:24px;border:1px solid #000;box-sizing:border-box;"></div>
<svg style="position:absolute;left:5px;top:663px" width="8" height="11" viewBox="0 0 8 11" shape-rendering="crispEdges"><path d="M1 0 L7 5.5 L1 11 Z" fill="#000" shape-rendering="geometricPrecision"/></svg>
<div style="left:2px;top:681px;width:983px;height:6px;background:#fff"></div>
<div style="left:1015px;top:489px;width:111px;height:34px;border:1px solid #adadad;box-sizing:border-box;background:#e1e1e1;"></div>
<span style="left:1015px;width:111px;text-align:center;top:497.43px;font-size:15px;line-height:normal;color:#000">Удалить</span>
<div style="left:717px;top:702px;width:112px;height:34px;border:2px solid #0078d7;box-sizing:border-box;background:#e1e1e1;"></div>
<span style="left:717px;width:112px;text-align:center;top:710.42px;font-size:15px;line-height:normal;color:#000">ОК</span>
<div style="left:866px;top:702px;width:112px;height:34px;border:1px solid #adadad;box-sizing:border-box;background:#e1e1e1;"></div>
<span style="left:866px;width:112px;text-align:center;top:710.42px;font-size:15px;line-height:normal;color:#000">Отмена</span>
<div style="left:1015px;top:702px;width:111px;height:34px;border:1px solid #adadad;box-sizing:border-box;background:#e1e1e1;"></div>
<span style="left:1015px;width:111px;text-align:center;top:710.42px;font-size:15px;line-height:normal;color:#000">Справка</span>
</body></html>
